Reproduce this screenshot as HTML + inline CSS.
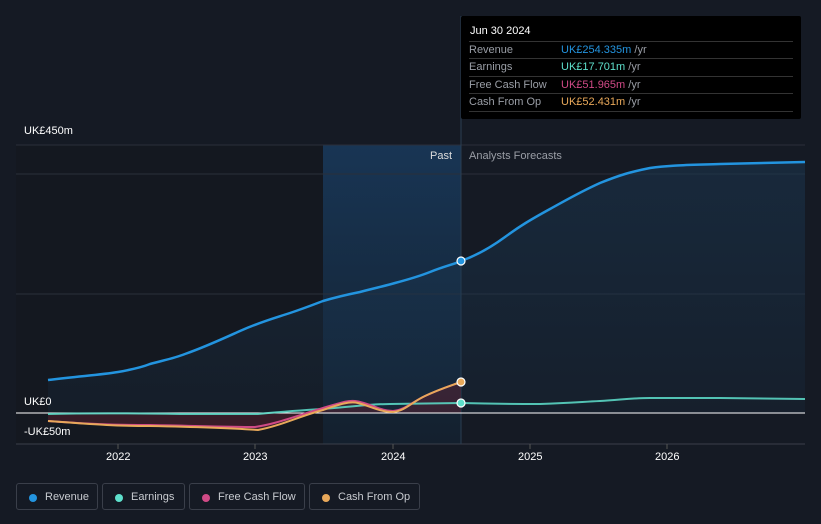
<!DOCTYPE html>
<html><head><style>
body{margin:0;width:821px;height:524px;background:#151a24;font-family:"Liberation Sans",sans-serif;overflow:hidden;position:relative}
.t{position:absolute;color:#fff;font-size:11px}
.tip{position:absolute;left:461px;top:16px;width:340px;height:103px;background:#000;border-radius:2px}
.tip .r{position:absolute;left:8px;width:324px;border-top:1px solid #333;height:17px;font-size:11px;color:#9a9ea6;line-height:17px}
.tip .r span{position:absolute;left:92px}
.leg{position:absolute;top:483px;height:27px;border:1px solid #3a3f4a;border-radius:3px;color:#c8cbd0;font-size:11px;line-height:27px;box-sizing:border-box}
.leg i{position:absolute;left:12px;top:10px;width:8px;height:8px;border-radius:50%}
</style></head><body>
<svg width="821" height="524" style="position:absolute;left:0;top:0">
<defs><linearGradient id="g" x1="0" y1="0" x2="0" y2="1"><stop offset="0" stop-color="#1a3650" stop-opacity=".9"/><stop offset="1" stop-color="#1a3650" stop-opacity=".3"/></linearGradient>
<linearGradient id="p" x1="0" y1="0" x2="0" y2="1"><stop offset="0" stop-color="#183554"/><stop offset="1" stop-color="#14202e"/></linearGradient></defs>
<rect x="16" y="145" width="307" height="299" fill="#141820"/>
<rect x="323" y="145" width="138" height="299" fill="url(#p)"/>
<line x1="16" y1="145" x2="805" y2="145" stroke="#2a2f3a"/>
<line x1="16" y1="174" x2="805" y2="174" stroke="#2a2f3a"/>
<line x1="16" y1="294" x2="805" y2="294" stroke="#2a2f3a"/>
<line x1="16" y1="444" x2="805" y2="444" stroke="#3a3f4a"/>
<line x1="461" y1="16" x2="461" y2="444" stroke="#2a3e52"/>
<path d="M48,380 C80,376 100,375 118,372 C135,369 145,366 150,364 C165,360 175,358 185,354 C205,347 220,340 240,331 C260,322 275,318 290,313 C305,308 315,304 323,301 C340,296 350,294 360,292 C375,288 385,286 395,283 C410,279 420,276 430,272 C445,266 455,264 461,261 C475,256 490,248 505,237 C520,226 530,220 550,209 C570,198 580,192 600,183 C620,175 630,172 650,168 C670,165 690,165 720,164 L805,162 L805,413 L48,413Z" fill="url(#g)" opacity=".6"/>
<path d="M48,421 C90,424 110,426 150,426 C200,427 230,428 258,429 C280,425 300,414 323,408 C340,402 350,400 358,402 C370,405 380,411 393,411 C405,410 412,402 425,396 C440,389 450,386 461,382 L461,413 L48,413Z" fill="#5a2030" opacity=".5"/>
<line x1="16" y1="413" x2="805" y2="413" stroke="#fff" stroke-width="1"/>
<path d="M48,414 C90,413 120,413 180,414 L258,414 C290,411 305,410 323,409 C360,406 370,404 390,404 L461,403 C500,404 520,404 540,404 C570,403 580,402 600,401 C620,400 630,398 650,398 L720,398 L805,399" fill="none" stroke="#5ee0cc" stroke-width="2" opacity=".85"/>
<path d="M48,421 C90,424 110,425 150,425 C200,426 230,427 255,427 C275,424 290,418 323,408 C340,403 348,400 355,401 C370,403 380,411 393,411 C405,410 412,402 425,396 C440,389 450,386 461,382" fill="none" stroke="#d04a86" stroke-width="2"/>
<path d="M48,421 C90,424 110,426 150,426 C200,427 230,428 258,430 C280,426 300,416 323,410 C340,404 350,401 358,403 C370,406 380,412 393,412 C405,411 412,402 425,396 C440,389 450,386 461,382" fill="none" stroke="#e8a85a" stroke-width="2"/>
<path d="M48,380 C80,376 100,375 118,372 C135,369 145,366 150,364 C165,360 175,358 185,354 C205,347 220,340 240,331 C260,322 275,318 290,313 C305,308 315,304 323,301 C340,296 350,294 360,292 C375,288 385,286 395,283 C410,279 420,276 430,272 C445,266 455,264 461,261 C475,256 490,248 505,237 C520,226 530,220 550,209 C570,198 580,192 600,183 C620,175 630,172 650,168 C670,165 690,165 720,164 L805,162" fill="none" stroke="#2394df" stroke-width="2.5"/>
<circle cx="461" cy="261" r="4" fill="#2394df" stroke="#fff" stroke-width="1.2"/>
<circle cx="461" cy="403" r="4" fill="#5ee0cc" stroke="#fff" stroke-width="1.2"/>
<circle cx="461" cy="382" r="4" fill="#e8a85a" stroke="#fff" stroke-width="1.2"/>
<g stroke="#555" ><line x1="118" y1="444" x2="118" y2="449"/><line x1="255" y1="444" x2="255" y2="449"/><line x1="393" y1="444" x2="393" y2="449"/><line x1="530" y1="444" x2="530" y2="449"/><line x1="667" y1="444" x2="667" y2="449"/></g>
</svg>
<div class="t" style="left:24px;top:125px">UK£450m</div>
<div class="t" style="left:24px;top:396px">UK£0</div>
<div class="t" style="left:24px;top:426px">-UK£50m</div>
<div class="t" style="left:430px;top:150px;color:#ddd">Past</div>
<div class="t" style="left:469px;top:150px;color:#9a9ea6">Analysts Forecasts</div>
<div class="t" style="left:106px;top:451px">2022</div>
<div class="t" style="left:243px;top:451px">2023</div>
<div class="t" style="left:381px;top:451px">2024</div>
<div class="t" style="left:518px;top:451px">2025</div>
<div class="t" style="left:655px;top:451px">2026</div>
<div class="tip">
<div class="t" style="left:9px;top:9px">Jun 30 2024</div>
<div class="r" style="top:25px">Revenue<span><b style="font-weight:normal;color:#2394df">UK£254.335m</b> /yr</span></div>
<div class="r" style="top:42px">Earnings<span><b style="font-weight:normal;color:#5ee0cc">UK£17.701m</b> /yr</span></div>
<div class="r" style="top:60px">Free Cash Flow<span><b style="font-weight:normal;color:#d04a86">UK£51.965m</b> /yr</span></div>
<div class="r" style="top:77px">Cash From Op<span><b style="font-weight:normal;color:#e8a85a">UK£52.431m</b> /yr</span></div>
<div class="r" style="top:95px;height:0"></div>
</div>
<div class="leg" style="left:16px;width:82px"><i style="background:#2394df"></i><span style="margin-left:28px">Revenue</span></div>
<div class="leg" style="left:102px;width:83px"><i style="background:#5ee0cc"></i><span style="margin-left:28px">Earnings</span></div>
<div class="leg" style="left:189px;width:116px"><i style="background:#d04a86"></i><span style="margin-left:28px">Free Cash Flow</span></div>
<div class="leg" style="left:309px;width:111px"><i style="background:#e8a85a"></i><span style="margin-left:28px">Cash From Op</span></div>
</body></html>
